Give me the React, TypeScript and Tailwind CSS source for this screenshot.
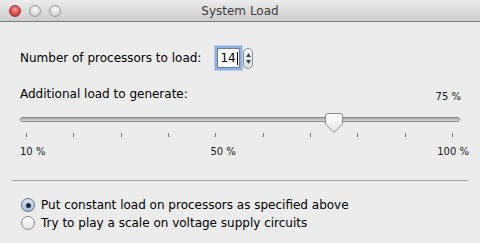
import React from 'react'

const font = { fontFamily: '"DejaVu Sans", "Liberation Sans", sans-serif' }

function TrafficLight({ red }: { red?: boolean }) {
  return (
    <div
      className={
        red
          ? 'w-[12px] h-[12px] rounded-full border border-[#9a3b3b] bg-[radial-gradient(circle_at_50%_35%,#f7a8a8_0%,#e0524f_45%,#b52c2a_100%)]'
          : 'w-[12px] h-[12px] rounded-full border border-[#9c9c9c] bg-[radial-gradient(circle_at_50%_35%,#fbfbfb_0%,#dcdcdc_55%,#b8b8b8_100%)]'
      }
    />
  )
}

function Stepper() {
  return (
    <div className="w-[10px] h-[21px] rounded-full border border-[#8e8e8e] bg-gradient-to-b from-[#fdfdfd] to-[#dedede] flex flex-col items-center justify-center gap-[3px]">
      <svg width="5" height="4" viewBox="0 0 5 4">
        <path d="M2.5 0 L5 4 L0 4 Z" fill="#404040" />
      </svg>
      <svg width="5" height="4" viewBox="0 0 5 4">
        <path d="M0 0 L5 0 L2.5 4 Z" fill="#404040" />
      </svg>
    </div>
  )
}

function Knob() {
  return (
    <svg width="18" height="20" viewBox="0 0 18 20">
      <defs>
        <linearGradient id="knobFill" x1="0" y1="0" x2="0" y2="1">
          <stop offset="0" stopColor="#ffffff" />
          <stop offset="1" stopColor="#e4e4e4" />
        </linearGradient>
      </defs>
      <path
        d="M3 0.5 H15 Q17.5 0.5 17.5 3 V11 L9 19.5 L0.5 11 V3 Q0.5 0.5 3 0.5 Z"
        fill="url(#knobFill)"
        stroke="#8c8c8c"
        strokeWidth="1"
      />
    </svg>
  )
}

function Radio({ checked }: { checked?: boolean }) {
  return (
    <div
      className={
        checked
          ? 'w-[14px] h-[14px] rounded-full border border-[#5e7290] bg-gradient-to-b from-[#dbe6f3] to-[#a9bdd6] flex items-center justify-center'
          : 'w-[14px] h-[14px] rounded-full border border-[#8f8f8f] bg-gradient-to-b from-[#ffffff] to-[#e2e2e2]'
      }
    >
      {checked && <div className="w-[5px] h-[5px] rounded-full bg-[#1c2b40]" />}
    </div>
  )
}

export default function App() {
  const ticks = Array.from({ length: 10 })

  return (
    <div className="w-[480px] h-[243px] bg-[#ececec] flex flex-col overflow-hidden" style={font}>
      {/* title bar */}
      <div className="h-[22px] shrink-0 flex items-center border-b border-[#7d7d7d] bg-gradient-to-b from-[#ececec] to-[#cdcdcd]">
        <div className="w-[70px] flex items-center gap-[8px] pl-[9px]">
          <TrafficLight red />
          <TrafficLight />
          <TrafficLight />
        </div>
        <div className="flex-1 text-center text-[12px] leading-[22px] text-[#3c3c3c]">System Load</div>
        <div className="w-[70px]" />
      </div>

      <div className="px-[20px] flex flex-col">
        {/* processors */}
        <div className="mt-[25px] h-[22px] flex items-center">
          <span className="text-[12px] text-black">Number of processors to load:</span>
          <div className="ml-[16px] w-[23px] h-[20px] bg-white border border-[#6d7f99] shadow-[0_0_0_2px_#8fb1df,0_0_0_3px_#b7cdea] flex items-center pl-[2px] text-[12px] text-black">
            14
            <div className="ml-[1px] w-px h-[13px] bg-black" />
          </div>
          <div className="ml-[3px]">
            <Stepper />
          </div>
        </div>

        {/* load label */}
        <div className="mt-[18px] flex justify-between">
          <span className="text-[12px] leading-[15px] text-black">Additional load to generate:</span>
          <span className="mt-[4px] mr-[-1px] text-[10px] leading-[12px] text-[#1a1a1a]">75 %</span>
        </div>

        {/* slider */}
        <div className="relative mt-[10px] h-[20px]">
          <div className="mt-[4px] h-[5px] rounded-full border border-[#8a8a8a] bg-gradient-to-b from-[#a9a9a9] to-[#d6d6d6]" />
          <div className="absolute left-[305px] top-[0px]">
            <Knob />
          </div>
        </div>
        <div className="h-[4px] flex justify-between pl-[6px] pr-[7px]">
          {ticks.map((_, i) => (
            <div key={i} className="w-px h-[4px] bg-[#7a7a7a]" />
          ))}
        </div>
        <div className="mt-[9px] mr-[-9px] flex text-[10px] leading-[12px] text-[#1a1a1a]">
          <span>10 %</span>
          <span className="ml-[165px]">50 %</span>
          <span className="ml-auto">100 %</span>
        </div>

        {/* separator */}
        <div className="mt-[22px] mx-[-8px] h-px bg-[#a3a3a3]" />

        {/* radios */}
        <div className="mt-[15px] flex flex-col">
          <label className="h-[18px] flex items-center gap-[6px] pl-[1px]">
            <Radio checked />
            <span className="text-[12px] text-black">Put constant load on processors as specified above</span>
          </label>
          <label className="h-[18px] flex items-center gap-[6px] pl-[1px]">
            <Radio />
            <span className="text-[12px] text-black">Try to play a scale on voltage supply circuits</span>
          </label>
        </div>
      </div>
    </div>
  )
}
